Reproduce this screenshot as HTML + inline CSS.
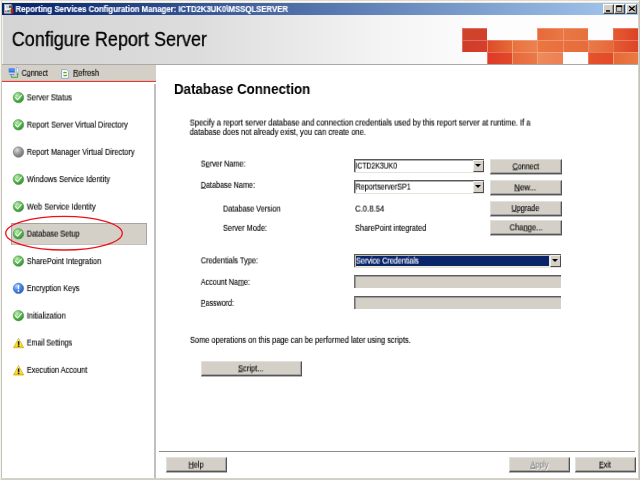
<!DOCTYPE html>
<html lang="en"><head><meta charset="utf-8"><title>Reporting Services Configuration Manager</title>
<style>
*{box-sizing:border-box;margin:0;padding:0}
html,body{width:640px;height:480px;overflow:hidden;background:#ece9d8}
body{font-family:"Liberation Sans",sans-serif;font-size:8px;color:#000;position:relative}
.abs{position:absolute;white-space:nowrap;transform-origin:0 50%;will-change:transform}
.box{position:absolute}
.sec{position:absolute;left:0;top:0;width:0;height:0}
h1,h2{font-weight:normal}
svg{position:absolute;overflow:visible}
u{text-decoration:underline;text-decoration-thickness:0.8px;text-underline-offset:0px;text-decoration-color:rgba(0,0,0,.55)}
.lbl{font-size:8.3px;line-height:12px;color:#000;-webkit-text-stroke-width:0.12px}
.ttl{font-size:8.3px;line-height:12px;color:#fff;font-weight:bold;-webkit-text-stroke:0.15px #fff}
.h1{font-size:19.5px;line-height:26px;color:#000;-webkit-text-stroke:0.3px #000}
h2.h2{font-size:14px;line-height:18px;font-weight:bold;color:#000}
#frame{left:0;top:0;width:640px;height:480px;background:#ece9d8;border-style:solid;border-width:1px;border-color:#dedbce #c4c1b6 #d2cfc4 #f6f5f0;box-shadow:inset 1px 0 0 #d2cfc4,inset 0 1px 0 #fbfaf6,inset -1px -1px 0 #d6d3ca}
#titlebar{left:2px;top:3px;width:636px;height:12px;background:linear-gradient(to right,#0a246a 0%,#0d2a72 6%,#a6caf0 100%)}
#header{left:2px;top:15px;width:636px;height:49px;border-left:1px solid #f2f2f2;background:linear-gradient(to right,#d4d4d4 0%,#dcdcdc 30%,#f4f4f4 60%,#fcfcfc 75%,#fdfdfd 100%)}
#hline{left:2px;top:64px;width:636px;height:1px;background:#a8a8a8}
#toolbar{left:2px;top:65px;width:154px;height:16px;background:#d4d0c8}
#redline{left:2px;top:81px;width:154px;height:1px;background:#e43a36;box-shadow:0 1px 0 rgba(228,58,54,.22),0 -1px 0 rgba(228,58,54,.12)}
#leftpane{left:1px;top:82px;width:155px;height:396px;background:#fff;border-left:1px solid #c2c0b8}
#lpr{left:154px;top:84px;width:2px;height:394px;background:#c0c0c0}
#main{left:156px;top:65px;width:482px;height:413px;background:#fff}
.btn{position:absolute;background:#d4d0c8;border:1px solid;border-color:#e2e0da #555 #555 #e2e0da;box-shadow:inset -1px -1px 0 rgba(120,120,120,.5),0 1px 0 rgba(90,90,90,.45)}
.combo{position:absolute;background:#fff;border:solid #5a5a5a;border-width:1px 0 0 1px;box-shadow:inset 1px 1px 0 rgba(70,70,70,.45),0 1px 0 #e6e3da}
.dd{position:absolute;right:0;top:0;width:11px;bottom:0;background:#d4d0c8;border:1px solid;border-color:#f0efec #4c4c4c #4c4c4c #f0efec}
.dd:after{content:"";position:absolute;left:1px;top:3px;border:3px solid transparent;border-top:3.4px solid #000;border-bottom:0}
.field{position:absolute;background:#d4d0c8;border-top:1px solid #5c5c5c;border-left:1px solid #707070;box-shadow:inset 1px 1px 0 rgba(70,70,70,.4)}
.tile{position:absolute;border-top:1px solid rgba(255,255,255,.25);border-left:1px solid rgba(255,255,255,.25)}
.cb{position:absolute;top:4px;height:10px;background:#d4d0c8;border:1px solid;border-color:#fff #404040 #404040 #fff;box-shadow:inset -1px -1px 0 rgba(128,128,128,.6)}
</style></head><body>
<div class="sec" id="sec-frame">
<div class="box" id="frame"></div>
</div>
<div class="sec" id="sec-titlebar">
<div class="box" id="titlebar"></div>
<svg style="left:4px;top:4px" width="10" height="10" viewBox="0 0 10 10"><rect x="0.3" y="0.3" width="7" height="9" fill="#f4f4f4" stroke="#9aa4b8" stroke-width="0.6"/><rect x="2" y="1.5" width="4" height="3" fill="#c8ccd4"/><rect x="1" y="6.5" width="2" height="2" fill="#f08030"/><rect x="3.2" y="6" width="2" height="2.5" fill="#2c8cf0"/><rect x="5.2" y="5.5" width="1.6" height="3" fill="#58b840"/><rect x="6.8" y="4.5" width="2.4" height="5" fill="#c82020"/><rect x="5" y="1.5" width="4" height="2.4" fill="#5a5a5a"/></svg>
<div class="cb" style="left:603px;width:11px"></div>
<div class="cb" style="left:614px;width:11px"></div>
<div class="cb" style="left:626px;width:11px"></div>
<svg style="left:603px;top:4px" width="35" height="10" viewBox="0 0 35 10"><rect x="3" y="6.2" width="4" height="1.5" fill="#000"/><rect x="13.6" y="1.9" width="5.2" height="5.4" fill="none" stroke="#3a3a3a" stroke-width="0.8"/><rect x="13.2" y="1.5" width="6" height="1.6" fill="#000"/><path d="M26.1 2.2 L31.7 6.9 M31.7 2.2 L26.1 6.9" stroke="#000" stroke-width="1.3"/></svg>
<span class="abs ttl" id="title" style="left:15px;top:3px;transform:translate(0.5px,0.05px) scaleX(0.9372);">Reporting Services Configuration Manager: ICTD2K3UK0\MSSQLSERVER</span>
</div>
<div class="sec" id="sec-header">
<div class="box" id="header"></div>
<div class="tile" style="left:462px;top:28px;width:25px;height:12px;background:linear-gradient(to right,#cf442c,#d2402a)"></div>
<div class="tile" style="left:537px;top:28px;width:26px;height:12px;background:linear-gradient(to right,#e66a3a,#ea7646)"></div>
<div class="tile" style="left:563px;top:28px;width:25px;height:12px;background:linear-gradient(to right,#ea7646,#e8703e)"></div>
<div class="tile" style="left:613px;top:28px;width:25px;height:12px;background:linear-gradient(to right,#e65a30,#dc4226)"></div>
<div class="tile" style="left:462px;top:40px;width:25px;height:12px;background:linear-gradient(to right,#d03c2a,#d4402a)"></div>
<div class="tile" style="left:487px;top:40px;width:25px;height:12px;background:linear-gradient(to right,#de4c2a,#e66a38)"></div>
<div class="tile" style="left:512px;top:40px;width:25px;height:12px;background:linear-gradient(to right,#e8723e,#ec8250)"></div>
<div class="tile" style="left:537px;top:40px;width:26px;height:12px;background:linear-gradient(to right,#ea7642,#e8703e)"></div>
<div class="tile" style="left:563px;top:40px;width:25px;height:12px;background:linear-gradient(to right,#e8703e,#e66c3c)"></div>
<div class="tile" style="left:588px;top:40px;width:25px;height:12px;background:linear-gradient(to right,#ea7a48,#e6683a)"></div>
<div class="tile" style="left:613px;top:40px;width:25px;height:12px;background:linear-gradient(to right,#e45a32,#de4428)"></div>
<div class="tile" style="left:487px;top:52px;width:25px;height:12px;background:linear-gradient(to right,#de3a28,#e2482a)"></div>
<div class="tile" style="left:512px;top:52px;width:25px;height:12px;background:linear-gradient(to right,#e8683a,#ea7a48)"></div>
<div class="tile" style="left:537px;top:52px;width:26px;height:12px;background:linear-gradient(to right,#ee8a5c,#ec8050)"></div>
<div class="tile" style="left:588px;top:52px;width:25px;height:12px;background:linear-gradient(to right,#e6522c,#e24a28)"></div>
<div class="tile" style="left:613px;top:52px;width:25px;height:12px;background:linear-gradient(to right,#e66a38,#ea7a44)"></div>
<div class="box" id="hline"></div>
<h1 class="abs h1" id="h1" style="left:11px;top:26px;transform:translate(0.75px,0px) scaleX(0.9238);">Configure Report Server</h1>
</div>
<div class="sec" id="sec-toolbar">
<div class="box" id="toolbar"></div>
<div class="box" id="redline"></div>
<svg style="left:8px;top:67px" width="12" height="12" viewBox="0 0 12 12"><rect x="0.9" y="1.4" width="5.8" height="4.3" fill="#2c6cf2" stroke="#7c9ce0" stroke-width="0.5"/><rect x="1.6" y="2.6" width="4.4" height="0.9" fill="#7cb0ff"/><rect x="1.1" y="5.8" width="5.4" height="2.4" rx="0.6" fill="#c4d0e6"/><rect x="1.4" y="7.2" width="4.8" height="1" fill="#6a84b8"/><rect x="8.4" y="0.7" width="2.2" height="4.4" fill="#eaf0fc" stroke="#8ea4d4" stroke-width="0.5"/><path d="M3.3 8.6 V10.3 H9.6 V7.4" stroke="#2aa22a" stroke-width="0.9" fill="none"/><path d="M8.2 7.6 H11 L9.6 6 Z" fill="#2aa22a"/></svg>
<svg style="left:61.3px;top:68.6px" width="8.2" height="10" viewBox="0 0 9 11"><path d="M0.6 0.6 H6 L8.4 3 V10.2 H0.6 Z" fill="#fcfcfc" stroke="#7c94c4" stroke-width="0.8"/><path d="M2.6 4.6 Q4.4 3 6.2 4.6 M6.4 6.6 Q4.6 8.2 2.8 6.6" stroke="#58a820" stroke-width="1.3" fill="none"/></svg>
<span class="abs lbl" id="tb1" style="left:21px;top:66px;transform:translate(0.6px,0.85px) scaleX(0.8538);">C<u>o</u>nnect</span>
<span class="abs lbl" id="tb2" style="left:73px;top:66px;transform:translate(0px,0.85px) scaleX(0.8946);"><u>R</u>efresh</span>
</div>
<div class="sec" id="sec-nav">
<div class="box" id="leftpane"></div>
<div class="box" id="lpr"></div>
<div class="box" style="left:11px;top:223px;width:136px;height:22px;background:#d4d0c8;border:1px solid #a4a4a4;border-bottom-color:#c4c2bc"></div>
<svg style="left:12px;top:91px" width="13" height="13" viewBox="0 0 13 13"><defs><radialGradient id="gk97" cx="0.36" cy="0.3" r="0.75"><stop offset="0" stop-color="#c6eebc"/><stop offset="0.5" stop-color="#62bc58"/><stop offset="1" stop-color="#2e8a30"/></radialGradient></defs><g transform="translate(0.45 0.55)"><circle cx="6" cy="6" r="5.25" fill="url(#gk97)" stroke="#4a9c48" stroke-width="0.6"/><path d="M3.1 6.1 L5.1 8.2 L8.9 3.9" stroke="#fff" stroke-opacity="0.92" stroke-width="1.15" fill="none" stroke-linecap="round" stroke-linejoin="round"/></g></svg>
<svg style="left:12px;top:118px" width="13" height="13" viewBox="0 0 13 13"><defs><radialGradient id="gk124" cx="0.36" cy="0.3" r="0.75"><stop offset="0" stop-color="#c6eebc"/><stop offset="0.5" stop-color="#62bc58"/><stop offset="1" stop-color="#2e8a30"/></radialGradient></defs><g transform="translate(0.45 0.81)"><circle cx="6" cy="6" r="5.25" fill="url(#gk124)" stroke="#4a9c48" stroke-width="0.6"/><path d="M3.1 6.1 L5.1 8.2 L8.9 3.9" stroke="#fff" stroke-opacity="0.92" stroke-width="1.15" fill="none" stroke-linecap="round" stroke-linejoin="round"/></g></svg>
<svg style="left:12px;top:146px" width="13" height="13" viewBox="0 0 13 13"><defs><radialGradient id="gg" cx="0.36" cy="0.3" r="0.75"><stop offset="0" stop-color="#dcdcdc"/><stop offset="0.5" stop-color="#9c9c9c"/><stop offset="1" stop-color="#6c6c6c"/></radialGradient></defs><g transform="translate(0.45 0.07)"><circle cx="6" cy="6" r="5.25" fill="url(#gg)" stroke="#7a7a7a" stroke-width="0.6"/></g></svg>
<svg style="left:12px;top:173px" width="13" height="13" viewBox="0 0 13 13"><defs><radialGradient id="gk179" cx="0.36" cy="0.3" r="0.75"><stop offset="0" stop-color="#c6eebc"/><stop offset="0.5" stop-color="#62bc58"/><stop offset="1" stop-color="#2e8a30"/></radialGradient></defs><g transform="translate(0.45 0.33)"><circle cx="6" cy="6" r="5.25" fill="url(#gk179)" stroke="#4a9c48" stroke-width="0.6"/><path d="M3.1 6.1 L5.1 8.2 L8.9 3.9" stroke="#fff" stroke-opacity="0.92" stroke-width="1.15" fill="none" stroke-linecap="round" stroke-linejoin="round"/></g></svg>
<svg style="left:12px;top:200px" width="13" height="13" viewBox="0 0 13 13"><defs><radialGradient id="gk206" cx="0.36" cy="0.3" r="0.75"><stop offset="0" stop-color="#c6eebc"/><stop offset="0.5" stop-color="#62bc58"/><stop offset="1" stop-color="#2e8a30"/></radialGradient></defs><g transform="translate(0.45 0.59)"><circle cx="6" cy="6" r="5.25" fill="url(#gk206)" stroke="#4a9c48" stroke-width="0.6"/><path d="M3.1 6.1 L5.1 8.2 L8.9 3.9" stroke="#fff" stroke-opacity="0.92" stroke-width="1.15" fill="none" stroke-linecap="round" stroke-linejoin="round"/></g></svg>
<svg style="left:12px;top:227px" width="13" height="13" viewBox="0 0 13 13"><defs><radialGradient id="gk233" cx="0.36" cy="0.3" r="0.75"><stop offset="0" stop-color="#c6eebc"/><stop offset="0.5" stop-color="#62bc58"/><stop offset="1" stop-color="#2e8a30"/></radialGradient></defs><g transform="translate(0.45 0.85)"><circle cx="6" cy="6" r="5.25" fill="url(#gk233)" stroke="#4a9c48" stroke-width="0.6"/><path d="M3.1 6.1 L5.1 8.2 L8.9 3.9" stroke="#fff" stroke-opacity="0.92" stroke-width="1.15" fill="none" stroke-linecap="round" stroke-linejoin="round"/></g></svg>
<svg style="left:12px;top:255px" width="13" height="13" viewBox="0 0 13 13"><defs><radialGradient id="gk261" cx="0.36" cy="0.3" r="0.75"><stop offset="0" stop-color="#c6eebc"/><stop offset="0.5" stop-color="#62bc58"/><stop offset="1" stop-color="#2e8a30"/></radialGradient></defs><g transform="translate(0.45 0.11)"><circle cx="6" cy="6" r="5.25" fill="url(#gk261)" stroke="#4a9c48" stroke-width="0.6"/><path d="M3.1 6.1 L5.1 8.2 L8.9 3.9" stroke="#fff" stroke-opacity="0.92" stroke-width="1.15" fill="none" stroke-linecap="round" stroke-linejoin="round"/></g></svg>
<svg style="left:12px;top:282px" width="13" height="13" viewBox="0 0 13 13"><defs><radialGradient id="gi" cx="0.36" cy="0.3" r="0.75"><stop offset="0" stop-color="#b4d2fa"/><stop offset="0.5" stop-color="#4c88e0"/><stop offset="1" stop-color="#2258b8"/></radialGradient></defs><g transform="translate(0.45 0.37)"><circle cx="6" cy="6" r="5.25" fill="url(#gi)" stroke="#4478c8" stroke-width="0.6"/><rect x="5.3" y="2.6" width="1.4" height="4.2" rx="0.6" fill="#fff"/><circle cx="6" cy="8.6" r="0.9" fill="#fff"/></g></svg>
<svg style="left:12px;top:309px" width="13" height="13" viewBox="0 0 13 13"><defs><radialGradient id="gk315" cx="0.36" cy="0.3" r="0.75"><stop offset="0" stop-color="#c6eebc"/><stop offset="0.5" stop-color="#62bc58"/><stop offset="1" stop-color="#2e8a30"/></radialGradient></defs><g transform="translate(0.45 0.63)"><circle cx="6" cy="6" r="5.25" fill="url(#gk315)" stroke="#4a9c48" stroke-width="0.6"/><path d="M3.1 6.1 L5.1 8.2 L8.9 3.9" stroke="#fff" stroke-opacity="0.92" stroke-width="1.15" fill="none" stroke-linecap="round" stroke-linejoin="round"/></g></svg>
<svg style="left:12px;top:337px" width="13" height="13" viewBox="0 0 13 13"><defs><linearGradient id="gw343" x1="0" y1="0" x2="0" y2="1"><stop offset="0" stop-color="#fffaa0"/><stop offset="0.55" stop-color="#ffee3c"/><stop offset="1" stop-color="#f4c800"/></linearGradient></defs><g transform="translate(0.6 0.29)"><path d="M6 1 L11.1 10.5 L0.9 10.5 Z" fill="url(#gw343)" stroke="#cfa41c" stroke-width="0.7" stroke-linejoin="round"/><rect x="5.2" y="3.9" width="1.6" height="3.7" fill="#1c1c3c"/><rect x="5.2" y="8.2" width="1.6" height="1.4" fill="#1c1c3c"/></g></svg>
<svg style="left:12px;top:364px" width="13" height="13" viewBox="0 0 13 13"><defs><linearGradient id="gw370" x1="0" y1="0" x2="0" y2="1"><stop offset="0" stop-color="#fffaa0"/><stop offset="0.55" stop-color="#ffee3c"/><stop offset="1" stop-color="#f4c800"/></linearGradient></defs><g transform="translate(0.6 0.55)"><path d="M6 1 L11.1 10.5 L0.9 10.5 Z" fill="url(#gw370)" stroke="#cfa41c" stroke-width="0.7" stroke-linejoin="round"/><rect x="5.2" y="3.9" width="1.6" height="3.7" fill="#1c1c3c"/><rect x="5.2" y="8.2" width="1.6" height="1.4" fill="#1c1c3c"/></g></svg>
<svg style="left:0;top:210px" width="130" height="46" viewBox="0 0 130 46"><ellipse cx="64" cy="23.2" rx="58.3" ry="16.8" fill="none" stroke="#ee1018" stroke-width="1.3"/></svg>
<span class="abs lbl" id="n1" style="left:26px;top:91px;transform:translate(0.75px,0.35px) scaleX(0.9002);">Server Status</span>
<span class="abs lbl" id="n2" style="left:26px;top:118px;transform:translate(0.75px,0.6px) scaleX(0.8952);">Report Server Virtual Directory</span>
<span class="abs lbl" id="n3" style="left:26px;top:145px;transform:translate(0.75px,0.85px) scaleX(0.8896);">Report Manager Virtual Directory</span>
<span class="abs lbl" id="n4" style="left:26px;top:173px;transform:translate(0.75px,0.1px) scaleX(0.8982);">Windows Service Identity</span>
<span class="abs lbl" id="n5" style="left:26px;top:200px;transform:translate(0.75px,0.6px) scaleX(0.9086);">Web Service Identity</span>
<span class="abs lbl" id="n6" style="left:26px;top:227px;transform:translate(0.75px,0.6px) scaleX(0.8863);">Database Setup</span>
<span class="abs lbl" id="n7" style="left:26px;top:255px;transform:translate(0.75px,0.1px) scaleX(0.9022);">SharePoint Integration</span>
<span class="abs lbl" id="n8" style="left:26px;top:282px;transform:translate(0.75px,0.1px) scaleX(0.8799);">Encryption Keys</span>
<span class="abs lbl" id="n9" style="left:26px;top:309px;transform:translate(0.75px,0.6px) scaleX(0.8995);">Initialization</span>
<span class="abs lbl" id="n10" style="left:26px;top:336px;transform:translate(0.75px,0.55px) scaleX(0.8533);">Email Settings</span>
<span class="abs lbl" id="n11" style="left:26px;top:363px;transform:translate(0.75px,0.85px) scaleX(0.887);">Execution Account</span>
</div>
<div class="sec" id="sec-content">
<div class="box" id="main"></div>
<div class="combo" style="left:354px;top:159px;width:130px;height:13px"><div class="dd"></div></div>
<div class="combo" style="left:354px;top:180px;width:130px;height:13px"><div class="dd"></div></div>
<div class="combo" style="left:354px;top:254px;width:207px;height:13px"><div class="box" style="left:1px;top:1px;right:12px;bottom:1px;background:#0a246a;box-shadow:0 0 0 0.5px #d8d4b0"></div><div class="dd"></div></div>
<div class="field" style="left:354px;top:275px;width:207px;height:13px"></div>
<div class="field" style="left:354px;top:296px;width:207px;height:13px"></div>
<div class="btn" style="left:490px;top:159px;width:72px;height:15px"></div>
<div class="btn" style="left:490px;top:180px;width:72px;height:15px"></div>
<div class="btn" style="left:490px;top:201px;width:72px;height:15px"></div>
<div class="btn" style="left:490px;top:220px;width:72px;height:15px"></div>
<div class="btn" style="left:201px;top:361px;width:101px;height:15px"></div>
<h2 class="abs h2" id="h2" style="left:174px;top:80px;transform:translate(0px,0px) scaleX(0.9522);">Database Connection</h2>
<span class="abs lbl" id="d1" style="left:189px;top:116px;transform:translate(0.7px,0.55px) scaleX(0.9157);">Specify a report server database and connection credentials used by this report server at runtime. If a</span>
<span class="abs lbl" id="d2" style="left:189px;top:125px;transform:translate(0.7px,0.85px) scaleX(0.9052);">database does not already exist, you can create one.</span>
<span class="abs lbl" id="l1" style="left:200px;top:157px;transform:translate(0.75px,0.6px) scaleX(0.874);">S<u>e</u>rver Name:</span>
<span class="abs lbl" id="l2" style="left:200px;top:178px;transform:translate(0.75px,0.85px) scaleX(0.871);"><u>D</u>atabase Name:</span>
<span class="abs lbl" id="l3" style="left:223px;top:202px;transform:translate(0px,0.6px) scaleX(0.8779);">Database Version</span>
<span class="abs lbl" id="l4" style="left:223px;top:221px;transform:translate(0px,0.85px) scaleX(0.8833);">Server Mode:</span>
<span class="abs lbl" id="l5" style="left:200px;top:254px;transform:translate(0.75px,0.35px) scaleX(0.8885);">Credentials T<u>y</u>pe:</span>
<span class="abs lbl" id="l6" style="left:200px;top:275px;transform:translate(0.75px,0.85px) scaleX(0.8681);">Account Na<u>m</u>e:</span>
<span class="abs lbl" id="l7" style="left:200px;top:296px;transform:translate(0.75px,0.85px) scaleX(0.8581);"><u>P</u>assword:</span>
<span class="abs lbl" id="v1" style="left:355px;top:159px;transform:translate(0.5px,0.6px) scaleX(0.8256);">ICTD2K3UK0</span>
<span class="abs lbl" id="v2" style="left:355px;top:180px;transform:translate(0.5px,0.6px) scaleX(0.8682);">ReportserverSP1</span>
<span class="abs lbl" id="v3" style="left:355px;top:202px;transform:translate(0px,0.6px) scaleX(0.9323);">C.0.8.54</span>
<span class="abs lbl" id="v4" style="left:355px;top:221px;transform:translate(0px,0.85px) scaleX(0.8877);">SharePoint integrated</span>
<span class="abs lbl" id="v5" style="left:356px;top:254px;transform:translate(0px,0.6px) scaleX(0.8723);color:#fff">Service Credentials</span>
<span class="abs lbl" id="s1" style="left:190px;top:333px;transform:translate(0px,0.85px) scaleX(0.8946);">Some operations on this page can be performed later using scripts.</span>
<span class="abs lbl" id="b1" style="left:512px;top:160px;transform:translate(0.5px,0.35px) scaleX(0.8651);"><u>C</u>onnect</span>
<span class="abs lbl" id="b2" style="left:514px;top:181px;transform:translate(0.25px,0.35px) scaleX(0.9533);"><u>N</u>ew...</span>
<span class="abs lbl" id="b3" style="left:511px;top:202px;transform:translate(0.5px,0.1px) scaleX(0.8714);"><u>U</u>pgrade</span>
<span class="abs lbl" id="b4" style="left:509px;top:221px;transform:translate(0.5px,0.35px) scaleX(0.9163);">Cha<u>n</u>ge...</span>
<span class="abs lbl" id="b5" style="left:238px;top:362px;transform:translate(0px,0.35px) scaleX(0.9062);"><u>S</u>cript...</span>
</div>
<div class="sec" id="sec-footer">
<div class="box" id="fline" style="left:159px;top:451px;width:476px;height:1px;background:#8c8c8c"></div>
<div class="btn" style="left:166px;top:457px;width:61px;height:15px"></div>
<div class="btn" style="left:509px;top:457px;width:61px;height:15px"></div>
<div class="btn" style="left:575px;top:457px;width:61px;height:15px"></div>
<span class="abs lbl" id="b6" style="left:188px;top:458px;transform:translate(0.5px,0.6px) scaleX(0.8783);"><u>H</u>elp</span>
<span class="abs lbl" id="b7" style="left:530px;top:458px;transform:translate(0.5px,0.6px) scaleX(0.8662);color:#8a8a8a;text-shadow:0.7px 0.7px 0 #fff"><u>A</u>pply</span>
<span class="abs lbl" id="b8" style="left:599px;top:458px;transform:translate(0px,0.6px) scaleX(0.8658);"><u>E</u>xit</span>
</div>
</body></html>
